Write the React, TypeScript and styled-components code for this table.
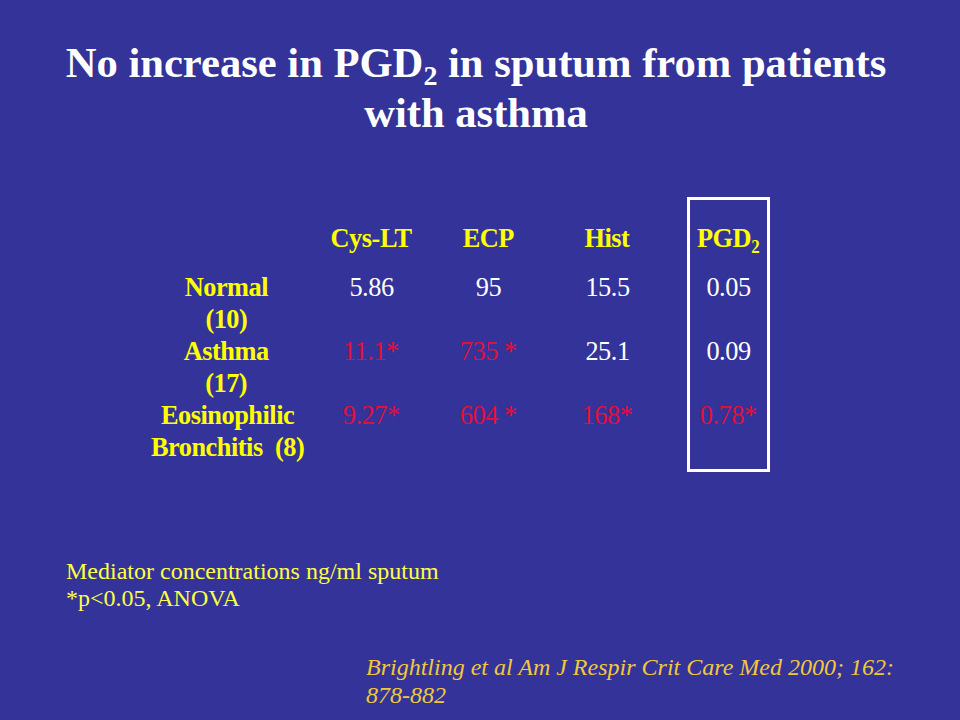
import React from "react";
import styled, { createGlobalStyle } from "styled-components";

const GlobalStyle = createGlobalStyle`
    html, body {
        margin: 0;
        padding: 0;
        background: #333399;
    }
`;

export const Slide = styled.div`
    width: 960px;
    height: 720px;
    overflow: hidden;
    background-color: #333399;
    font-family: "Liberation Serif", "Times New Roman", serif;
    box-sizing: border-box;
    padding-top: 38px;
`;

export const Title = styled.h1`
    margin: 0;
    color: #ffffff;
    font-size: 42.6px;
    line-height: 50px;
    font-weight: bold;
    text-align: center;
    padding-right: 8px;
`;

export const Sub = styled.sub<{ size: number; drop: number }>`
    font-size: ${({ size }) => size}px;
    vertical-align: -${({ drop }) => drop}px;
    line-height: 0;
`;

export const Table = styled.div`
    display: flex;
    align-items: flex-start;
    margin-top: 59px;
    margin-left: 146px;
`;

export const Column = styled.div<{ width: number; boxed?: boolean }>`
    width: ${({ width }) => width}px;
    box-sizing: border-box;
    padding-top: ${({ boxed }) => (boxed ? "21.5px" : "24.5px")};
    padding-bottom: ${({ boxed }) => (boxed ? "6.5px" : "0")};
    border: ${({ boxed }) => (boxed ? "3px solid #ffffff" : "none")};
    margin-left: ${({ boxed }) => (boxed ? "13px" : "0")};
    display: flex;
    flex-direction: column;
`;

export const HeadCell = styled.div`
    height: 49px;
    text-align: center;
    font-size: 28px;
    line-height: 32px;
    font-weight: bold;
    color: #ffff00;
    white-space: nowrap;
`;

export const Cell = styled.div<{ label?: boolean; red?: boolean }>`
    height: 64px;
    text-align: center;
    font-size: 28px;
    line-height: 32px;
    font-weight: ${({ label }) => (label ? "bold" : "normal")};
    color: ${({ label, red }) => (label ? "#ffff00" : red ? "#e0103a" : "#ffffff")};
    white-space: pre;
`;

export const Squeeze = styled.span`
    display: inline-block;
    transform: scaleX(0.94);
    transform-origin: center;
    letter-spacing: -0.5px;
`;

export const Notes = styled.div`
    margin-top: 86px;
    margin-left: 66px;
    color: #ffff44;
    font-size: 24px;
    line-height: 27px;
`;

export const Citation = styled.div`
    margin-top: 41px;
    margin-left: 366px;
    width: 560px;
    color: #f2c83a;
    font-size: 24px;
    line-height: 28px;
    font-style: italic;
`;

type Col = { head: string; values: { v: string; red?: boolean }[] };

const columns: Col[] = [
    { head: "Cys-LT", values: [{ v: "5.86" }, { v: "11.1*", red: true }, { v: "9.27*", red: true }] },
    { head: "ECP", values: [{ v: "95" }, { v: "735 *", red: true }, { v: "604 *", red: true }] },
    { head: "Hist", values: [{ v: "15.5" }, { v: "25.1" }, { v: "168*", red: true }] },
];

const widths = [130, 104, 134];

const labels = [
    ["Normal", "(10)"],
    ["Asthma", "(17)"],
    ["Eosinophilic", "Bronchitis  (8)"],
];

const pgd = [{ v: "0.05" }, { v: "0.09" }, { v: "0.78*", red: true }];

const App: React.FC = () => {
    return (
        <>
            <GlobalStyle />
            <Slide>
                <Title>
                    No increase in PGD<Sub size={28} drop={8}>2</Sub> in sputum from patients
                    <br />
                    with asthma
                </Title>

                <Table>
                    <Column width={160}>
                        <HeadCell />
                        {labels.map((l) => (
                            <Cell label key={l[0]}>
                                <Squeeze>
                                    {l[0]}
                                    <br />
                                    {l[1]}
                                </Squeeze>
                            </Cell>
                        ))}
                    </Column>

                    {columns.map((c, i) => (
                        <Column width={widths[i]} key={c.head}>
                            <HeadCell>
                                <Squeeze>{c.head}</Squeeze>
                            </HeadCell>
                            {c.values.map((val, j) => (
                                <Cell red={val.red} key={j}>
                                    <Squeeze>{val.v}</Squeeze>
                                </Cell>
                            ))}
                        </Column>
                    ))}

                    <Column width={83} boxed>
                        <HeadCell>
                            <Squeeze>
                                PGD<Sub size={18} drop={6}>2</Sub>
                            </Squeeze>
                        </HeadCell>
                        {pgd.map((val, j) => (
                            <Cell red={val.red} key={j}>
                                <Squeeze>{val.v}</Squeeze>
                            </Cell>
                        ))}
                    </Column>
                </Table>

                <Notes>
                    Mediator concentrations ng/ml sputum
                    <br />
                    *p&lt;0.05, ANOVA
                </Notes>

                <Citation>Brightling et al Am J Respir Crit Care Med 2000; 162: 878-882</Citation>
            </Slide>
        </>
    );
};

export default App;
